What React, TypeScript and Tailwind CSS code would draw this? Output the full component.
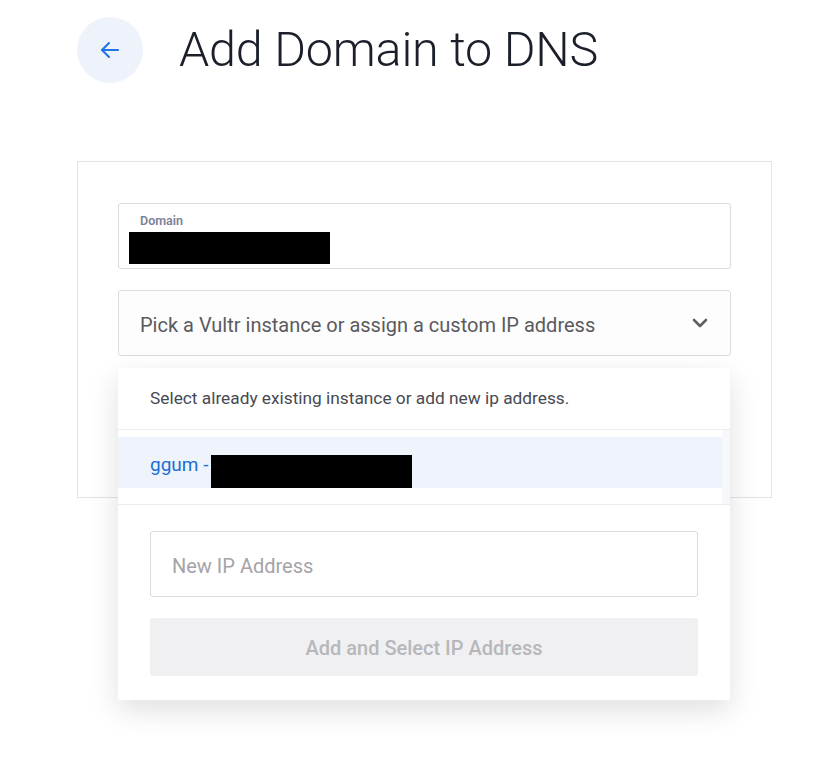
import React from "react";

export default function App() {
  const font = { fontFamily: "Roboto, 'Noto Sans', Arial, sans-serif" };
  return (
    <div className="w-[832px] h-[766px] bg-white overflow-hidden" style={font}>
      <div className="pl-[77px] pt-[17px]">
        <div className="flex items-center">
          <div className="w-[66px] h-[66px] rounded-full bg-[#eef3fb] flex items-center justify-center">
            <svg width="24" height="24" viewBox="0 0 24 24" fill="none" stroke="#1f74e6" strokeWidth="2" strokeLinecap="round" strokeLinejoin="round">
              <path d="M20 12H4" />
              <path d="M11 5l-7 7 7 7" />
            </svg>
          </div>
          <h1 className="ml-[36px] text-[48.5px] font-light text-[#1b1f2a] leading-none tracking-[-0.2px]">Add Domain to DNS</h1>
        </div>

        <div className="mt-[78px] w-[695px] border border-[#e4e4e7] px-[40px] pt-[41px] pb-[141px]">
          <div className="flex flex-col gap-[21px]">
            <div className="h-[66px] border border-[#dcdcdf] rounded-[3px] pl-[21px] pt-[9px]">
              <div className="text-[12.5px] font-semibold text-[#7c8197] leading-[16px]">Domain</div>
              <div className="mt-[3px] -ml-[11px] w-[201px] h-[32px] bg-black" />
            </div>
            <div className="relative">
              <div className="h-[66px] border border-[#dcdcdf] rounded-[3px] flex items-center justify-between pl-[21px] pr-[20px] bg-[#fdfdfd]">
                <span className="text-[20px] text-[#5a5a5e] pt-[4px]">Pick a Vultr instance or assign a custom IP address</span>
                <svg width="20" height="20" viewBox="0 0 20 20" fill="none" stroke="#5f5f64" strokeWidth="2.6" strokeLinecap="round" strokeLinejoin="round">
                  <path d="M4 7l6 6 6-6" />
                </svg>
              </div>
              <div className="absolute left-0 top-full mt-[12px] w-[612px] bg-white shadow-[0_10px_30px_rgba(0,0,0,0.13)] rounded-[2px]">
                <div className="h-[62px] flex items-center pl-[32px] border-b border-[#ececef]">
                  <span className="text-[17.3px] text-[#474a52]">Select already existing instance or add new ip address.</span>
                </div>
                <div className="flex border-b border-[#ececef]">
                  <div className="flex-1 pt-[7px] pb-[16px]">
                    <div className="h-[51px] bg-[#eef3fc] flex items-stretch pl-[32px]">
                      <span className="self-center pt-[5px] text-[19px] text-[#1b6fd6]">ggum -</span>
                      <div className="self-end ml-[3px] w-[201px] h-[33px] bg-black" />
                    </div>
                  </div>
                  <div className="w-[8px] bg-[#f7f8fb]" />
                </div>
                <div className="px-[32px] pt-[26px] pb-[24px] flex flex-col gap-[21px]">
                  <div className="h-[66px] border border-[#dcdcdf] rounded-[3px] flex items-center pl-[21px]">
                    <span className="text-[20px] text-[#a4a4a8] pt-[3px]">New IP Address</span>
                  </div>
                  <div className="h-[58px] bg-[#f0f0f2] rounded-[3px] flex items-center justify-center">
                    <span className="text-[20px] font-medium text-[#b7b7bb] pt-[1px]">Add and Select IP Address</span>
                  </div>
                </div>
              </div>
            </div>
          </div>
        </div>
      </div>
    </div>
  );
}
